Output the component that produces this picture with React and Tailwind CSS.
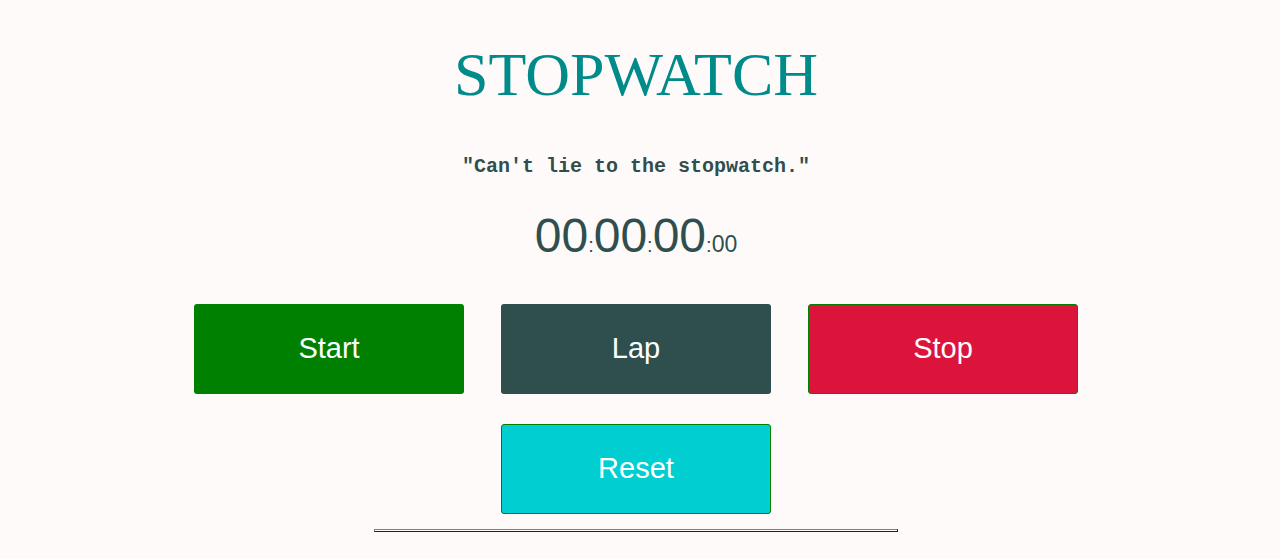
import React from "react";

const Button = ({ label, className }) => (
    <button
        className={`w-[270px] h-[90px] rounded-[3px] text-white text-[29px] font-['Liberation_Sans',Arial,sans-serif] ${className}`}
    >
        {label}
    </button>
);

const App = () => {
    return (
        <div className="min-h-[559px] bg-[#fffafa]">
            <div className="w-[1272px] flex flex-col items-center">
                <h1 className="mt-[38px] text-[62px] leading-[72px] text-[#008b8b] font-['Liberation_Serif','Times_New_Roman',serif]">
                    STOPWATCH
                </h1>

                <p className="mt-[45px] text-[20px] leading-[24px] font-bold text-[#2f4f4f] font-['Liberation_Mono','Courier_New',monospace]">
                    "Can't lie to the stopwatch."
                </p>

                <div className="mt-[33px] flex items-baseline text-[#2f4f4f] font-['Liberation_Sans',Arial,sans-serif] leading-none">
                    <span className="text-[48px]">00</span>
                    <span className="text-[20px]">:</span>
                    <span className="text-[48px]">00</span>
                    <span className="text-[20px]">:</span>
                    <span className="text-[48px]">00</span>
                    <span className="text-[20px]">:</span>
                    <span className="text-[23px]">00</span>
                </div>

                <div className="mt-[44px] flex gap-[37px]">
                    <Button label="Start" className="bg-[#008000]" />
                    <Button label="Lap" className="bg-[#2f4f4f]" />
                    <Button label="Stop" className="bg-[#dc143c] border border-[#008000]" />
                </div>

                <div className="mt-[30px]">
                    <Button label="Reset" className="bg-[#00ced1] border border-[#008000]" />
                </div>

                <div className="mt-[15px] w-[524px] h-[3px] border border-t-[#808080] border-l-[#808080] border-b-[#202020] border-r-[#202020]"></div>
            </div>
        </div>
    );
};

export default App;
